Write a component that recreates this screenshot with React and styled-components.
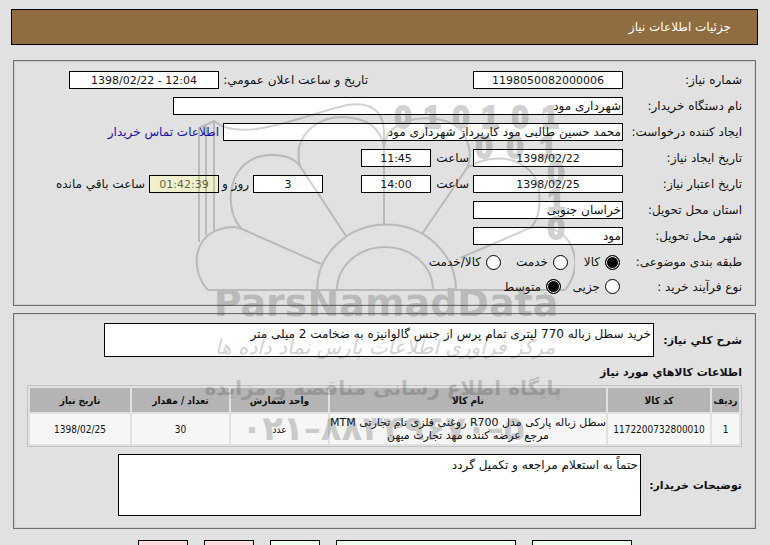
import React from "react";
import styled, { createGlobalStyle } from "styled-components";

const GlobalStyle = createGlobalStyle`
  *, *::before, *::after { box-sizing: border-box; }
  html { background: #e1e1e1; }
  body { margin: 0; height: 100vh; overflow: hidden; }
  body, input, textarea, button {
    font-family: "DejaVu Sans", Tahoma, sans-serif;
    font-size: 12px;
    color: #111;
  }
`;

const Page = styled.main`
  position: relative;
  padding: 9px 12px 0 11px;
`;

const TitleBar = styled.h1`
  display: flex;
  align-items: center;
  height: 36px;
  margin: 0 0 15px;
  padding: 0 26px;
  border: 1px solid #000;
  background: #8f6d41;
  color: #fff;
  font-size: 12px;
  font-weight: 400;
`;

const Panel = styled.section`
  margin: 0 2px 7px;
  padding: ${(p) => p.$pad};
  border: 1px solid #6f6f6f;
  box-shadow: inset 0 0 0 1px #d0d0d0;
`;

const Row = styled.div`
  display: flex;
  align-items: center;
  height: ${(p) => (p.$short ? "23px" : "26px")};
`;

const Label = styled.label`
  flex: none;
  width: ${(p) => p.$width || "auto"};
  white-space: nowrap;
`;

const SideLabel = styled(Label)`
  margin-inline-start: ${(p) => p.$before || "4px"};
  margin-inline-end: 4px;
`;

const Field = styled.input`
  flex: 0 1 ${(p) => p.$width};
  width: ${(p) => p.$width};
  min-width: 0;
  height: 18px;
  padding: 0 1px;
  border: 1px solid #000;
  border-radius: 0;
  background: ${(p) => (p.$countdown ? "#f0f0cc" : "#fff")};
  color: ${(p) => (p.$countdown ? "#66664c" : "#111")};
  font-size: ${(p) => (p.$center ? "11px" : "12px")};
  text-align: ${(p) => (p.$center ? "center" : "start")};
  margin-inline-start: ${(p) => p.$before || "0"};
`;

const ContactLink = styled.a`
  margin-inline-start: 4px;
  color: #1a0dab;
  text-decoration: none;
  white-space: nowrap;
`;

const Options = styled.div`
  display: flex;
  gap: 8px;
`;

const Option = styled.label`
  display: flex;
  align-items: center;
  gap: 5px;
  min-width: ${(p) => p.$width};
  padding-inline-start: 3px;
`;

const Radio = styled.input`
  appearance: none;
  flex: none;
  width: 15px;
  height: 15px;
  margin: 0;
  border: 1px solid #000;
  border-radius: 50%;
  background: #fff;
  &:checked {
    background: #000;
    box-shadow: inset 0 0 0 1px #fff;
  }
`;

const NoteRow = styled.div`
  display: flex;
  align-items: center;
  gap: ${(p) => p.$gap};
`;

const NoteLabel = styled.label`
  flex: none;
  width: ${(p) => p.$width};
  font-size: 11px;
  font-weight: 700;
  white-space: nowrap;
`;

const Note = styled.textarea`
  display: block;
  flex: 0 1 ${(p) => p.$width};
  width: ${(p) => p.$width};
  min-width: 0;
  height: ${(p) => p.$height};
  padding: 2px;
  border: 1px solid #000;
  border-radius: 0;
  background: #fff;
  line-height: 16px;
  resize: none;
  overflow: hidden;
`;

const SectionTitle = styled.h2`
  margin: 7px 0 4px;
  font-size: 11px;
  line-height: 17px;
  font-weight: 700;
`;

const Goods = styled.table`
  width: 100%;
  margin-bottom: 7px;
  table-layout: fixed;
  border: 1px solid #c4c4c4;
  border-collapse: separate;
  border-spacing: 2px;
  font-family: "DejaVu Sans Condensed", "DejaVu Sans", sans-serif;
  font-size: 10px;
  line-height: 13px;
  text-align: center;
`;

const HeadCell = styled.th`
  width: ${(p) => p.$width || "auto"};
  height: 24px;
  padding: 0;
  background: #b4b4b4;
  white-space: nowrap;
`;

const Cell = styled.td`
  height: 30px;
  padding: 0;
  background: #f6f6f6;
`;

const NameCell = styled(Cell)`
  font-family: "DejaVu Sans", sans-serif;
  font-size: 11px;
`;

const Actions = styled.div`
  display: flex;
  justify-content: center;
  gap: 16px;
  margin-top: 11px;
`;

const ActionButton = styled.button`
  width: ${(p) => p.$width};
  height: 28px;
  padding: 6px 0 0;
  border: 1px solid #000;
  border-radius: 0;
  background: ${(p) => (p.$danger ? "#ffdcdc" : "#eeffee")};
  white-space: nowrap;
`;

const Watermark = styled.svg`
  position: absolute;
  top: 90px;
  left: 50%;
  width: 380px;
  height: 360px;
  margin-left: -190px;
  pointer-events: none;
  opacity: 0.22;
  fill: none;
  stroke: #333;
  stroke-width: 2;
  direction: rtl;
`;

const MarkText = styled.text`
  fill: #333;
  stroke: ${(p) => (p.$heavy ? "#333" : "none")};
  stroke-width: 2;
  font-family: ${(p) => (p.$heavy ? '"Liberation Sans", sans-serif' : '"DejaVu Sans", sans-serif')};
  font-size: ${(p) => p.$size}px;
  font-weight: ${(p) => (p.$light ? 400 : 700)};
  font-style: ${(p) => (p.$slant ? "italic" : "normal")};
  text-anchor: middle;
  direction: ${(p) => (p.$ltr ? "ltr" : "rtl")};
`;

const digits = [
  ["0", 403, 128], ["1", 432, 128], ["0", 461, 128], ["1", 490, 128], ["0", 520, 128], ["1", 550, 128],
  ["0", 484, 158], ["0", 515, 158], ["1", 548, 158],
  ["0", 556, 184], ["1", 556, 211], ["0", 556, 239],
];

const columns = [
  ["ردیف", "27px"],
  ["کد کالا", "102px"],
  ["نام کالا", ""],
  ["واحد شمارش", "97px"],
  ["تعداد / مقدار", "97px"],
  ["تاریخ نیاز", "100px"],
];

const actions = [
  ["پاسخ به نیاز", "100px", false],
  ["مشاهده مدارک پیوست (0)", "180px", false],
  ["چاپ", "50px", false],
  ["بازگشت", "50px", true],
  ["خروج", "50px", true],
];

const LABEL = "119px";

function Choice({ name, text, width, checked }) {
  return (
    <Option $width={width}>
      <Radio type="radio" name={name} defaultChecked={checked} />
      {text}
    </Option>
  );
}

function Brand() {
  return (
    <Watermark viewBox="195 90 380 360" aria-hidden="true">
      <path d="M208 290H565M337 290A48 43 0 0 1 433 290M317 290A69 65 0 0 1 456 290" />
      <path d="M208 290C190 272 190 227 235 227L242 229L321 264M242 229C223 212 225 155 272 155Q292 155 300 166L346 236M300 166C292 135 318 117 343 117Q378 118 384 146V225" />
      <path d="M384 146C388 110 455 112 464 135Q474 153 467 168L422 234M467 168C495 150 534 158 539 190C541 211 537 222 530 228L460 258M530 228C572 220 587 264 565 290" />
      <path d="M199 242V128L214 121V231M206 235V125M214 121C242 144 300 116 347 105Q382 100 384 130V146" />
      {digits.map(([d, x, y], i) => (
        <MarkText key={i} x={x} y={y} $size={31} $ltr $heavy>{d}</MarkText>
      ))}
      <MarkText x="386" y="316" $size={38} $ltr>ParsNamadData</MarkText>
      <MarkText x="385" y="354" $size={20} $light $slant>مرکز فرآوری اطلاعات پارس نماد داده ها</MarkText>
      <MarkText x="383" y="395" $size={20}>پایگاه اطلاع رسانی مناقصه و مزایده</MarkText>
      <MarkText x="383" y="440" $size={34} $ltr>۰۲۱–۸۸۳۴۹۶۷۰–۵</MarkText>
    </Watermark>
  );
}

export default function App() {
  return (
    <>
      <GlobalStyle />
      <Page dir="rtl" lang="fa">
        <TitleBar>جزئیات اطلاعات نیاز</TitleBar>

        <Panel $pad="6px 13px 7px">
          <Row>
            <Label htmlFor="number" $width={LABEL}>شماره نیاز:</Label>
            <Field id="number" $width="150px" $center readOnly value="1198050082000006" />
            <SideLabel htmlFor="announced" $before="105px" $width="145px">تاریخ و ساعت اعلان عمومي:</SideLabel>
            <Field id="announced" $width="150px" $center readOnly dir="ltr" value="1398/02/22 - 12:04" />
          </Row>
          <Row>
            <Label htmlFor="buyer" $width={LABEL}>نام دستگاه خریدار:</Label>
            <Field id="buyer" $width="450px" readOnly value="شهرداری مود" />
          </Row>
          <Row>
            <Label htmlFor="creator" $width={LABEL}>ایجاد کننده درخواست:</Label>
            <Field id="creator" $width="400px" readOnly value="محمد حسین طالبی مود کارپرداز شهرداری مود" />
            <ContactLink href="#contact">اطلاعات تماس خریدار</ContactLink>
          </Row>
          <Row>
            <Label htmlFor="created" $width={LABEL}>تاریخ ایجاد نیاز:</Label>
            <Field id="created" $width="150px" $center readOnly dir="ltr" value="1398/02/22" />
            <SideLabel htmlFor="createdTime" $width="34px">ساعت</SideLabel>
            <Field id="createdTime" $width="70px" $center readOnly value="11:45" />
          </Row>
          <Row>
            <Label htmlFor="valid" $width={LABEL}>تاریخ اعتبار نیاز:</Label>
            <Field id="valid" $width="150px" $center readOnly dir="ltr" value="1398/02/25" />
            <SideLabel htmlFor="validTime" $width="34px">ساعت</SideLabel>
            <Field id="validTime" $width="70px" $center readOnly value="14:00" />
            <Field aria-label="روز" $width="70px" $before="38px" $center readOnly value="3" />
            <SideLabel htmlFor="remaining" $width="26px">روز و</SideLabel>
            <Field id="remaining" $width="70px" $center $countdown readOnly value="01:42:39" />
            <SideLabel htmlFor="remaining">ساعت باقي مانده</SideLabel>
          </Row>
          <Row>
            <Label htmlFor="province" $width={LABEL}>استان محل تحویل:</Label>
            <Field id="province" $width="150px" readOnly value="خراسان جنوبی" />
          </Row>
          <Row>
            <Label htmlFor="city" $width={LABEL}>شهر محل تحویل:</Label>
            <Field id="city" $width="150px" readOnly value="مود" />
          </Row>
          <Row role="radiogroup" aria-label="طبقه بندی موضوعی">
            <Label as="span" $width={LABEL}>طبقه بندی موضوعی:</Label>
            <Options>
              <Choice name="category" text="کالا" width="44px" checked />
              <Choice name="category" text="خدمت" width="59px" />
              <Choice name="category" text="کالا/خدمت" width="70px" />
            </Options>
          </Row>
          <Row $short role="radiogroup" aria-label="نوع فرآیند خرید">
            <Label as="span" $width={LABEL}>نوع فرآیند خرید :</Label>
            <Options>
              <Choice name="process" text="جزیی" width="51px" />
              <Choice name="process" text="متوسط" width="60px" checked />
            </Options>
          </Row>
        </Panel>

        <Panel $pad="9px 13px 12px">
          <NoteRow $gap="4px">
            <NoteLabel htmlFor="summary" $width="84px">شرح کلي نیاز:</NoteLabel>
            <Note id="summary" $width="550px" $height="34px" readOnly value="خرید سطل زباله 770 لیتری تمام پرس از جنس گالوانیزه به ضخامت 2 میلی متر" />
          </NoteRow>
          <SectionTitle>اطلاعات کالاهاي مورد نیاز</SectionTitle>
          <Goods>
            <thead>
              <tr>
                {columns.map(([name, width]) => (
                  <HeadCell key={name} $width={width}>{name}</HeadCell>
                ))}
              </tr>
            </thead>
            <tbody>
              <tr>
                <Cell>1</Cell>
                <Cell>1172200732800010</Cell>
                <NameCell>سطل زباله پارکی مدل R700 روغنی فلزی نام تجارتی MTM مرجع عرضه کننده مهد تجارت میهن</NameCell>
                <Cell>عدد</Cell>
                <Cell>30</Cell>
                <Cell dir="ltr">1398/02/25</Cell>
              </tr>
            </tbody>
          </Goods>
          <NoteRow $gap="4px">
            <NoteLabel htmlFor="remarks" $width="97px">توضیحات خریدار:</NoteLabel>
            <Note id="remarks" $width="523px" $height="62px" readOnly value="حتماً به استعلام مراجعه و تکمیل گردد" />
          </NoteRow>
        </Panel>

        <Actions>
          {actions.map(([text, width, danger]) => (
            <ActionButton key={text} type="button" $width={width} $danger={danger}>{text}</ActionButton>
          ))}
        </Actions>
        <Brand />
      </Page>
    </>
  );
}
